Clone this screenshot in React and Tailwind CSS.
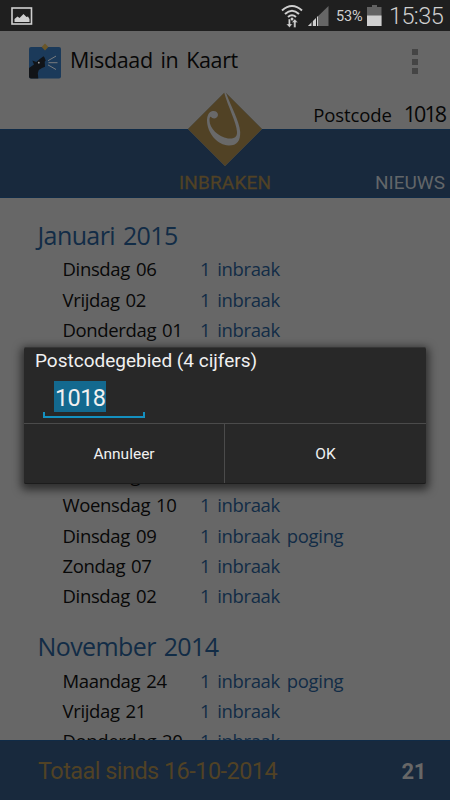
const months = [
  {
    title: "Januari 2015",
    rows: [
      ["Dinsdag 06", "1 inbraak"],
      ["Vrijdag 02", "1 inbraak"],
      ["Donderdag 01", "1 inbraak"],
    ],
  },
  {
    title: "December 2014",
    rows: [
      ["Zondag 28", "1 inbraak"],
      ["Vrijdag 19", "1 inbraak"],
      ["Maandag 15", "1 inbraak"],
      ["Woensdag 10", "1 inbraak"],
      ["Dinsdag 09", "1 inbraak poging"],
      ["Zondag 07", "1 inbraak"],
      ["Dinsdag 02", "1 inbraak"],
    ],
  },
  {
    title: "November 2014",
    rows: [
      ["Maandag 24", "1 inbraak poging"],
      ["Vrijdag 21", "1 inbraak"],
      ["Donderdag 20", "1 inbraak"],
    ],
  },
];

function StatusBar() {
  return (
    <div className="flex h-[31px] shrink-0 items-center bg-[#1f1f1f] font-[Roboto,sans-serif] text-[#cfcfcf]">
      <svg className="ml-[11px]" width="22" height="20" viewBox="0 0 22 20">
        <rect x="1" y="2" width="19.5" height="16" fill="none" stroke="#cfcfcf" strokeWidth="1.6" />
        <path d="M3.500 16v-3l3-2.500 2 1.500 4-4 3 3 1.500-.5 1.500 2.500v3z" fill="#cfcfcf" />
      </svg>
      <svg className="ml-auto" width="22" height="26" viewBox="0 0 22 26">
        <g fill="none" stroke="#cfcfcf" strokeWidth="2">
          <path d="M1 7.500Q11-1.500 21 7.500" />
          <path d="M4 11Q11 4.500 18 11" />
          <path d="M7 14Q11 10.500 15 14" />
        </g>
        <circle cx="11" cy="16" r="1.500" fill="#cfcfcf" />
        <path d="M7.300 16h2.200v5h2l-3.100 3.500L5.300 21h2zM12.700 24.500h2.200v-5h2L13.800 16l-3.100 3.500h2z" fill="#cfcfcf" stroke="#1f1f1f" strokeWidth=".4" />
      </svg>
      <svg className="ml-[5px]" width="21" height="20" viewBox="0 0 21 20">
        <path d="M0 20 20.500 0V20z" fill="#666" />
        <path d="M0 20l4-4v4zM5 20v-5l3-3v8zM9 20v-9l1-1v10z" fill="#cfcfcf" />
        <path d="M4 16v4M8.500 11.500V20" stroke="#1f1f1f" strokeWidth="1" />
      </svg>
      <span className="ml-[7px] mt-[2px] w-[27px] whitespace-nowrap text-[14.500px] tracking-[-0.1px]">53%</span>
      <svg className="ml-[4px]" width="15" height="21" viewBox="0 0 15 21">
        <path d="M5 0h5v2h4.500v19H0V2h5z" fill="#626262" />
        <path d="M0 10.500h14.500V21H0z" fill="#cfcfcf" />
      </svg>
      <span className="ml-[7px] mr-[7px] mt-[2px] w-[54px] whitespace-nowrap text-[23.500px] font-light tracking-[-0.600px]">15:35</span>
    </div>
  );
}

function AppIcon() {
  return (
    <svg width="32" height="36" viewBox="0 0 32 36">
      <rect y="4" width="32" height="31.500" rx="2" fill="#1b3a5a" />
      <path d="M16 .5l3.300 3.500L16 7.500 12.700 4z" fill="#6b5729" />
      <path d="M0 25l5-3.500-1.700-4 4 1.500 3.500-3 3.700-2.800 1 1.300 1.200 3-1 1.300.3 5-3 1.200-3.200 2-1 3 .5 5.500H2q-2 0-2-2z" fill="#111418" />
      <circle cx="9.800" cy="19.700" r=".9" fill="#a0a0a0" />
      <path d="M19 17.700l8-4.600M19.500 19.700H28.500M19 21.900l8 4.600" stroke="#828282" strokeWidth=".9" />
    </svg>
  );
}

function Header() {
  return (
    <header className="relative shrink-0">
      <div className="flex h-[68px] items-start pl-[29px]">
        <div className="mt-[12px]">
          <AppIcon />
        </div>
        <h1 className="ml-[9px] mt-[14px] text-[21.500px] leading-[29px] tracking-[-0.35px] text-[#070707] [word-spacing:2.500px]">
          Misdaad in Kaart
        </h1>
        <div className="ml-auto mr-[32px] mt-[18px] flex flex-col gap-[3.500px]">
          <i className="size-[6px] bg-[#454545]" />
          <i className="size-[6px] bg-[#454545]" />
          <i className="size-[6px] bg-[#454545]" />
        </div>
      </div>
      <div className="flex h-[30px] items-baseline justify-end pr-[5px] text-[#070707]">
        <span className="text-[18.500px] leading-[30px] tracking-[-0.1px]">Postcode</span>
        <span className="ml-[12px] text-[21.500px] leading-[30px] tracking-[-2px]">1018</span>
      </div>
      <nav className="flex h-[69px] items-end border-y border-[#102b47] bg-[#18293d] pb-[2px] font-[Roboto,sans-serif] text-[19px] leading-[24px]">
        <span className="ml-[179px] tracking-[0.15px] text-[#514225] [-webkit-text-stroke:0.3px_#514225]">INBRAKEN</span>
        <span className="ml-auto mr-[5px] text-[#626669]">NIEUWS</span>
      </nav>
      <svg className="absolute left-[187px] top-[60px]" width="76" height="76" viewBox="0 0 76 76">
        <path d="M38 1l37 37-37 37L1 38z" fill="#514225" stroke="#4d493f" strokeWidth=".6" />
        <path
          d="M37 1C41 16 49.500 31 50 41C50.300 47 46 48 41 47.500C31 46 22.500 37 22.500 29.500C22.500 27 23 25.500 24 25.800C25.500 28.300 30.500 28 31 24C31 20.500 28 19.500 25.500 20C21.500 21 20 25 20 30C20.500 43 31 54 41.500 54.500C50 54.700 53.500 50 53.200 41C52.500 30 44 16 38.700 1z"
          fill="#696969"
        />
      </svg>
    </header>
  );
}

function Month({ title, rows }) {
  return (
    <section className="mb-[16px]">
      <h2 className="pl-[37.500px] text-[25px] leading-[38px] tracking-[-0.600px] text-[#122c46] [word-spacing:2px]">{title}</h2>
      {rows.map(([day, text]) => (
        <div key={day} className="flex h-[30.350px] items-center whitespace-nowrap pl-[62.500px] text-[18.500px] tracking-[-0.35px] [word-spacing:1.500px]">
          <span className="w-[137.500px] text-[#080808]">{day}</span>
          <span className="text-[#122c46] [word-spacing:2.500px]">{text}</span>
        </div>
      ))}
    </section>
  );
}

function PostcodeDialog() {
  return (
    <div className="absolute left-[24px] top-[347px] flex h-[137px] w-[402px] flex-col rounded-[2px] border-b border-t border-b-[#1c1c1c] border-t-[#363636] bg-[#282828] font-[Roboto,sans-serif] text-[#f0f0f0] shadow-[0_3px_9px_3px_rgba(0,0,0,0.55)]">
      <h3 className="ml-[11px] mt-[1px] text-[19px] leading-[24px]">Postcodegebied (4 cijfers)</h3>
      <div className="ml-[19px] mt-[8px] flex h-[31px] w-[102px] items-start pl-[11px]">
        <span className="h-[31px] w-[52px] whitespace-nowrap bg-[#13698f] pl-px text-[23.500px] leading-[34px] tracking-[-0.600px]">1018</span>
      </div>
      <div className="ml-[19px] h-[6px] w-[102px] border-2 border-t-0 border-[#1490c0]" />
      <div className="mt-[5px] flex flex-1 border-t border-[#4b4b4b] text-[15.500px]">
        <button className="w-[201px] border-r border-[#4b4b4b] pt-[3px]">Annuleer</button>
        <button className="flex-1 pt-[3px]">OK</button>
      </div>
    </div>
  );
}

export default function App() {
  return (
    <div className="relative flex h-[800px] w-[450px] flex-col overflow-hidden bg-[#676767] font-['Open_Sans',sans-serif]">
      <StatusBar />
      <Header />
      <main className="min-h-0 flex-1 overflow-hidden pt-[18px]">
        {months.map((month) => (
          <Month key={month.title} {...month} />
        ))}
      </main>
      <footer className="flex h-[60px] shrink-0 items-center justify-between border-t border-[#102b47] bg-[#18293d] pl-[38px] pr-[24px] pt-[2px] font-[Roboto,sans-serif] text-[23.500px]">
        <span className="tracking-[-0.55px] text-[#514225]">Totaal sinds 16-10-2014</span>
        <span className="text-[22px] font-bold tracking-[-0.4px] text-[#676767]">21</span>
      </footer>
      <PostcodeDialog />
    </div>
  );
}
